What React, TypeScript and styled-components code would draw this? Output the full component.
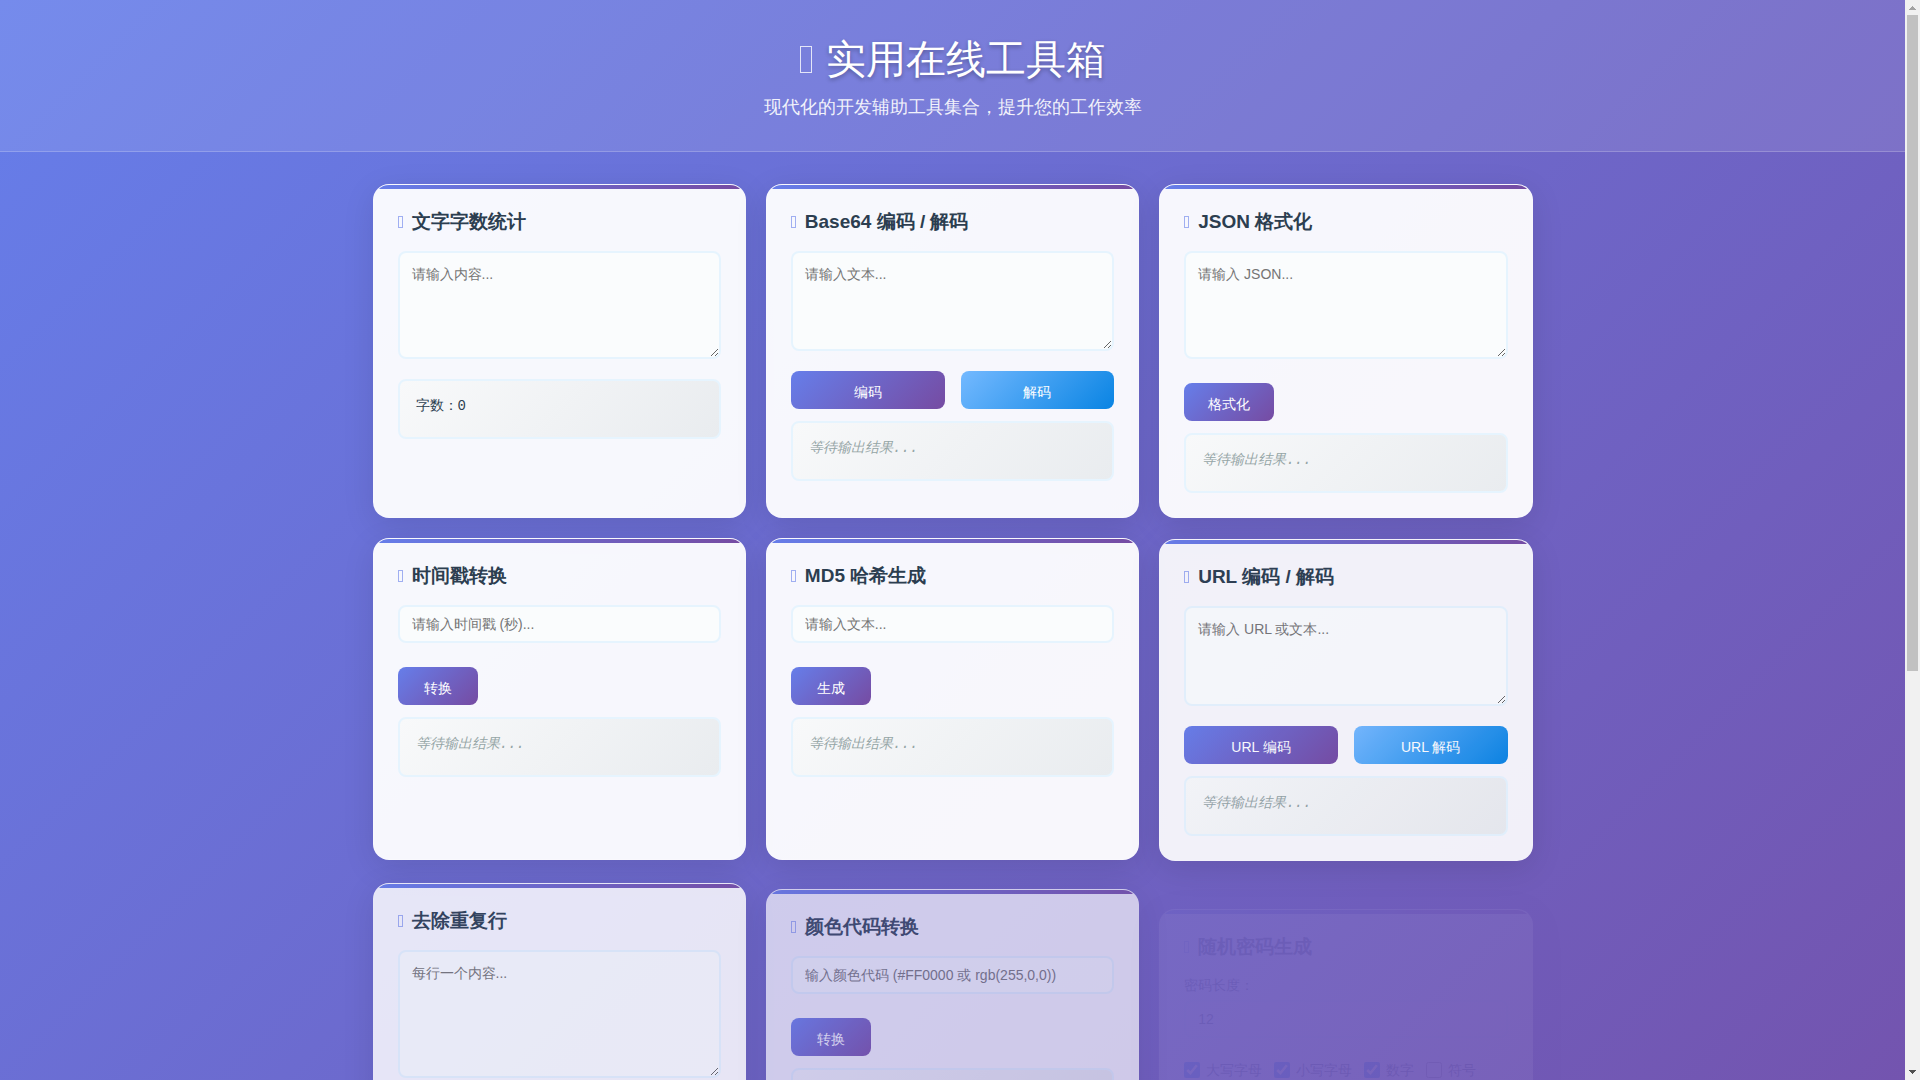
import React, { useId } from "react";
import styled, { createGlobalStyle, css } from "styled-components";

const sans = `"Liberation Sans", Arial, sans-serif`;
const mono = `"Liberation Mono", "Courier New", monospace`;

const GlobalStyle = createGlobalStyle`
  *, *::before, *::after { box-sizing: border-box; }
  body {
    margin: 0;
    font-family: ${sans};
    color: #2c3e50;
  }
  h1, h2, p { margin: 0; }
  button, input, textarea { font-family: inherit; }
`;

const Shell = styled.div`
  display: flex;
  height: 100vh;
`;

const Viewport = styled.div`
  flex: 1;
  min-width: 0;
  overflow-y: auto;
  scrollbar-width: none;
`;

const Page = styled.div`
  min-height: 160vh;
  background: linear-gradient(135deg, #667eea 0%, #764ba2 100%);
`;

const ScrollTrack = styled.aside`
  display: flex;
  flex-direction: column;
  align-items: center;
  width: 15px;
  background: #f1f1f1;
`;

const ScrollArrow = styled.svg<{ $muted?: boolean }>`
  flex: 0 0 15px;
  width: 15px;
  height: 15px;
  fill: ${(p) => (p.$muted ? "#a3a3a3" : "#505050")};
`;

const ScrollLane = styled.div`
  flex: 1;
  width: 11px;
`;

const ScrollThumb = styled.div`
  height: 62.5%;
  background: #c1c1c1;
`;

const Header = styled.header`
  display: flex;
  flex-direction: column;
  align-items: center;
  gap: 8px;
  padding: 32px 16px 30px;
  color: #fff;
  text-align: center;
  background: rgba(255, 255, 255, 0.1);
  border-bottom: 1px solid rgba(255, 255, 255, 0.2);
`;

const SiteTitle = styled.h1`
  display: flex;
  align-items: center;
  gap: 14px;
  font-size: 40px;
  font-weight: 300;
  line-height: 54px;
  text-shadow: 0 2px 4px rgba(0, 0, 0, 0.3);
`;

const Glyph = styled.span<{ $large?: boolean }>`
  flex: none;
  width: ${(p) => (p.$large ? 12 : 5)}px;
  height: ${(p) => (p.$large ? 27 : 12)}px;
  border: 1px solid currentColor;
  color: ${(p) => (p.$large ? "#fff" : "#667eea")};
  opacity: ${(p) => (p.$large ? 0.8 : 0.6)};
`;

const Tagline = styled.p`
  font-size: 18px;
  line-height: 27px;
  opacity: 0.9;
`;

const Grid = styled.main`
  display: grid;
  grid-template-columns: repeat(auto-fit, minmax(320px, 1fr));
  gap: 20px;
  max-width: 1200px;
  margin: 0 auto;
  padding: 32px 20px;
`;

const CardBox = styled.section<{ $opacity: number; $rise: number }>`
  position: relative;
  overflow: hidden;
  padding: 24px;
  background: rgba(255, 255, 255, 0.95);
  border: 1px solid rgba(255, 255, 255, 0.2);
  border-radius: 16px;
  box-shadow: 0 8px 32px rgba(0, 0, 0, 0.1);
  opacity: ${(p) => p.$opacity};
  transform: translateY(${(p) => p.$rise}px);

  &::before {
    content: "";
    position: absolute;
    inset: 0 0 auto;
    height: 4px;
    background: linear-gradient(90deg, #667eea, #764ba2);
  }
`;

const CardTitle = styled.h2`
  display: flex;
  align-items: center;
  gap: 9px;
  margin-bottom: 16px;
  font-size: 19px;
  font-weight: 600;
  line-height: 26px;
`;

const field = css`
  display: block;
  width: 100%;
  padding: 12px;
  color: #2c3e50;
  font-size: 14px;
  background: #fafcfd;
  border: 2px solid #e6f4fe;
  border-radius: 8px;
  outline: none;

  &::placeholder {
    color: #757575;
  }
`;

const TextArea = styled.textarea<{ $height: number }>`
  ${field}
  height: ${(p) => p.$height}px;
  line-height: 18px;
  resize: vertical;
`;

const TextInput = styled.input`
  ${field}
  height: 38px;
  padding: 0 12px;
`;

const Actions = styled.div<{ $top: number }>`
  display: flex;
  gap: 16px;
  margin-top: ${(p) => p.$top}px;
`;

const Button = styled.button<{ $tone?: "blue"; $grow?: boolean }>`
  flex: ${(p) => (p.$grow ? "1 1 0" : "0 0 auto")};
  min-width: 80px;
  height: 38px;
  padding: 6px 24px 0;
  color: #fff;
  font-size: 14px;
  font-weight: 500;
  background: ${(p) =>
    p.$tone === "blue"
      ? "linear-gradient(135deg, #74b9ff, #0984e3)"
      : "linear-gradient(135deg, #667eea, #764ba2)"};
  border: 0;
  border-radius: 8px;
  cursor: pointer;
`;

const Output = styled.output<{ $top?: number; $empty?: boolean }>`
  display: block;
  min-height: 60px;
  margin-top: ${(p) => p.$top ?? 12}px;
  padding: 15px 16px;
  color: ${(p) => (p.$empty ? "#95a5a6" : "#2c3e50")};
  font-family: ${mono};
  font-size: 14px;
  font-style: ${(p) => (p.$empty ? "italic" : "normal")};
  line-height: 20px;
  background: linear-gradient(135deg, #f8f9fa, #e9ecef);
  border: 2px solid #e6f4fe;
  border-radius: 8px;
`;

const FieldLabel = styled.label`
  display: block;
  margin-bottom: 6px;
  font-size: 14px;
  line-height: 18px;
`;

const Checks = styled.div`
  display: flex;
  flex-wrap: wrap;
  gap: 12px;
  margin-top: 24px;
`;

const CheckLabel = styled.label`
  display: flex;
  align-items: center;
  gap: 6px;
  font-size: 14px;
  line-height: 16px;

  input {
    width: 16px;
    height: 16px;
    margin: 0;
  }
`;

type CardProps = {
  title: string;
  opacity?: number;
  rise?: number;
  children: React.ReactNode;
};

function Card({ title, opacity = 1, rise = 0, children }: CardProps) {
  const id = useId();
  return (
    <CardBox $opacity={opacity} $rise={rise} aria-labelledby={id}>
      <CardTitle id={id}>
        <Glyph aria-hidden="true" />
        {title}
      </CardTitle>
      {children}
    </CardBox>
  );
}

const Pending = () => <Output $empty>等待输出结果...</Output>;

function Scrollbar() {
  return (
    <ScrollTrack aria-hidden="true">
      <ScrollArrow $muted viewBox="0 0 15 15">
        <path d="M7 6h1v1h1v1h1v1h1v1H4V9h1V8h1V7h1z" />
      </ScrollArrow>
      <ScrollLane>
        <ScrollThumb />
      </ScrollLane>
      <ScrollArrow viewBox="0 0 15 15">
        <path d="M4 5h7v1h-1v1H9v1H8v1H7V8H6V7H5V6H4z" />
      </ScrollArrow>
    </ScrollTrack>
  );
}

export default function App() {
  return (
    <Shell>
      <GlobalStyle />
      <Viewport>
        <Page>
          <Header>
            <SiteTitle>
              <Glyph $large aria-hidden="true" />
              实用在线工具箱
            </SiteTitle>
            <Tagline>现代化的开发辅助工具集合，提升您的工作效率</Tagline>
          </Header>
          <Grid>
            <Card title="文字字数统计">
              <TextArea $height={108} placeholder="请输入内容..." aria-label="内容" />
              <Output $top={20}>字数：0</Output>
            </Card>

            <Card title="Base64 编码 / 解码">
              <TextArea $height={100} placeholder="请输入文本..." aria-label="文本" />
              <Actions $top={20}>
                <Button $grow>编码</Button>
                <Button $grow $tone="blue">解码</Button>
              </Actions>
              <Pending />
            </Card>

            <Card title="JSON 格式化">
              <TextArea $height={108} placeholder="请输入 JSON..." aria-label="JSON" />
              <Actions $top={24}>
                <Button>格式化</Button>
              </Actions>
              <Pending />
            </Card>

            <Card title="时间戳转换">
              <TextInput placeholder="请输入时间戳 (秒)..." aria-label="时间戳" />
              <Actions $top={24}>
                <Button>转换</Button>
              </Actions>
              <Pending />
            </Card>

            <Card title="MD5 哈希生成">
              <TextInput placeholder="请输入文本..." aria-label="文本" />
              <Actions $top={24}>
                <Button>生成</Button>
              </Actions>
              <Pending />
            </Card>

            <Card title="URL 编码 / 解码" opacity={0.96} rise={1}>
              <TextArea $height={100} placeholder="请输入 URL 或文本..." aria-label="URL" />
              <Actions $top={20}>
                <Button $grow>URL 编码</Button>
                <Button $grow $tone="blue">URL 解码</Button>
              </Actions>
              <Pending />
            </Card>

            <Card title="去除重复行" opacity={0.88} rise={3}>
              <TextArea $height={128} placeholder="每行一个内容..." aria-label="文本行" />
              <Actions $top={24}>
                <Button>去重</Button>
              </Actions>
              <Pending />
            </Card>

            <Card title="颜色代码转换" opacity={0.7} rise={9}>
              <TextInput
                placeholder="输入颜色代码 (#FF0000 或 rgb(255,0,0))"
                aria-label="颜色代码"
              />
              <Actions $top={24}>
                <Button>转换</Button>
              </Actions>
              <Pending />
            </Card>

            <Card title="随机密码生成" opacity={0.05} rise={29}>
              <FieldLabel htmlFor="length">密码长度：</FieldLabel>
              <TextInput id="length" defaultValue="12" />
              <Checks>
                <CheckLabel><input type="checkbox" defaultChecked />大写字母</CheckLabel>
                <CheckLabel><input type="checkbox" defaultChecked />小写字母</CheckLabel>
                <CheckLabel><input type="checkbox" defaultChecked />数字</CheckLabel>
                <CheckLabel><input type="checkbox" />符号</CheckLabel>
              </Checks>
            </Card>
          </Grid>
        </Page>
      </Viewport>
      <Scrollbar />
    </Shell>
  );
}
